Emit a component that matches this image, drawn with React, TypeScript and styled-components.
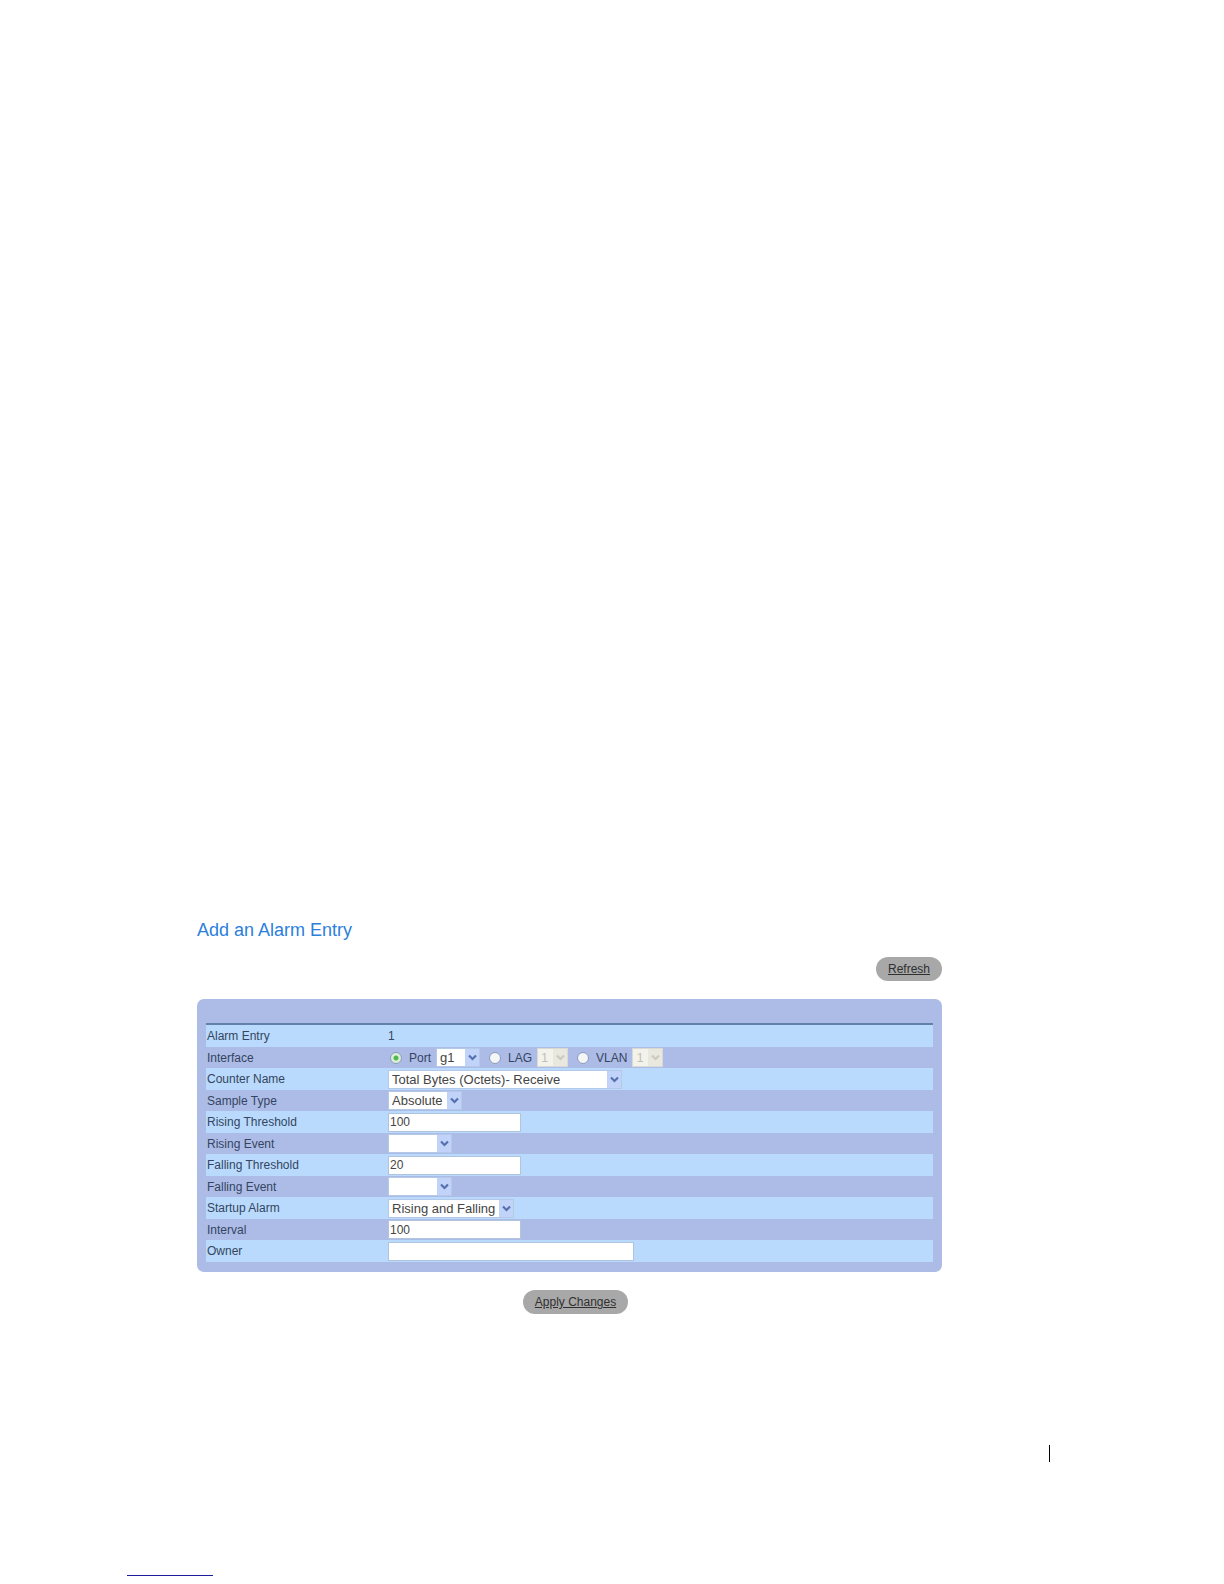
import React from 'react';
import styled, { createGlobalStyle } from 'styled-components';

interface DropdownProps {
  id: string;
  label?: string;
  width: number;
  options: string[];
  disabled?: boolean;
}

const Dropdown: React.FC<DropdownProps> = ({
  id,
  label,
  width,
  options,
  disabled,
}) => {
  return (
    <SelectWrap $width={width}>
      <SelectStyle id={id} aria-label={label} disabled={disabled}>
        {options.map((option) => (
          <option key={option}>{option}</option>
        ))}
      </SelectStyle>
      <ArrowBox $disabled={disabled}>
        <svg width="9" height="7" viewBox="0 0 9 7" aria-hidden="true">
          <path
            d="M1 1.5L4.5 5L8 1.5"
            fill="none"
            stroke={disabled ? '#cccabf' : '#5570ad'}
            strokeWidth="2.2"
          />
        </svg>
      </ArrowBox>
    </SelectWrap>
  );
};

interface InterfaceOptionProps {
  name: string;
  width: number;
  options: string[];
  checked?: boolean;
}

const InterfaceOption: React.FC<InterfaceOptionProps> = ({
  name,
  width,
  options,
  checked,
}) => {
  const id = name.toLowerCase();
  return (
    <OptionWrap>
      <RadioStyle
        type="radio"
        name="interface"
        id={id}
        defaultChecked={checked}
      />
      <OptionLabel htmlFor={id}>{name}</OptionLabel>
      <Dropdown
        id={`${id}-number`}
        label={`${name} number`}
        width={width}
        options={options}
        disabled={!checked}
      />
    </OptionWrap>
  );
};

interface FieldRowProps {
  label: string;
  htmlFor?: string;
  children: React.ReactNode;
}

const FieldRow: React.FC<FieldRowProps> = ({ label, htmlFor, children }) => {
  return (
    <RowStyle>
      <LabelCell scope="row">
        {htmlFor ? <label htmlFor={htmlFor}>{label}</label> : label}
      </LabelCell>
      <ValueCell>
        <ValueWrap>{children}</ValueWrap>
      </ValueCell>
    </RowStyle>
  );
};

const App: React.FC = () => {
  return (
    <>
      <GlobalStyle />
      <Page>
        <Content>
          <TitleStyle>Add an Alarm Entry</TitleStyle>
          <Toolbar>
            <PillButton type="button">Refresh</PillButton>
          </Toolbar>
          <Panel>
            <TableStyle>
              <tbody>
                <FieldRow label="Alarm Entry">
                  <StaticText>1</StaticText>
                </FieldRow>
                <FieldRow label="Interface">
                  <OptionGroup role="radiogroup" aria-label="Interface">
                    <InterfaceOption
                      name="Port"
                      width={44}
                      options={['g1']}
                      checked
                    />
                    <InterfaceOption name="LAG" width={31} options={['1']} />
                    <InterfaceOption name="VLAN" width={31} options={['1']} />
                  </OptionGroup>
                </FieldRow>
                <FieldRow label="Counter Name" htmlFor="counter">
                  <Dropdown
                    id="counter"
                    width={234}
                    options={['Total Bytes (Octets)- Receive']}
                  />
                </FieldRow>
                <FieldRow label="Sample Type" htmlFor="sample">
                  <Dropdown id="sample" width={74} options={['Absolute']} />
                </FieldRow>
                <FieldRow label="Rising Threshold" htmlFor="rising">
                  <InputStyle id="rising" $width={133} defaultValue="100" />
                </FieldRow>
                <FieldRow label="Rising Event" htmlFor="rising-event">
                  <Dropdown id="rising-event" width={64} options={['']} />
                </FieldRow>
                <FieldRow label="Falling Threshold" htmlFor="falling">
                  <InputStyle id="falling" $width={133} defaultValue="20" />
                </FieldRow>
                <FieldRow label="Falling Event" htmlFor="falling-event">
                  <Dropdown id="falling-event" width={64} options={['']} />
                </FieldRow>
                <FieldRow label="Startup Alarm" htmlFor="startup">
                  <Dropdown
                    id="startup"
                    width={126}
                    options={['Rising and Falling']}
                  />
                </FieldRow>
                <FieldRow label="Interval" htmlFor="interval">
                  <InputStyle id="interval" $width={133} defaultValue="100" />
                </FieldRow>
                <FieldRow label="Owner" htmlFor="owner">
                  <InputStyle id="owner" $width={246} />
                </FieldRow>
              </tbody>
            </TableStyle>
          </Panel>
          <ActionBar>
            <PillButton type="button">Apply Changes</PillButton>
          </ActionBar>
        </Content>
        <Footer>
          <FooterDivider />
          <FooterRule />
        </Footer>
      </Page>
    </>
  );
};

const GlobalStyle = createGlobalStyle`
  * {
    box-sizing: border-box;
  }
  body {
    margin: 0;
    background: #fff;
    font-family: 'Liberation Sans', Arial, sans-serif;
    font-size: 12px;
    color: #34455f;
  }
`;
const Page = styled.main`
  display: flex;
  flex-direction: column;
  min-height: 100vh;
  padding-top: 919px;
`;
const Content = styled.section`
  margin: 0 282px 0 197px;
`;
const TitleStyle = styled.h1`
  margin: 0 0 16px;
  color: #2b80dc;
  font-size: 18px;
  font-weight: 400;
  line-height: 22px;
`;
const Toolbar = styled.div`
  display: flex;
  justify-content: flex-end;
  margin-bottom: 18px;
`;
const ActionBar = styled.div`
  display: flex;
  justify-content: center;
  margin-top: 18px;
  padding-left: 12px;
`;
const PillButton = styled.button`
  height: 24px;
  padding: 0 12px;
  border: none;
  border-radius: 12px;
  background: #a8a8a8;
  color: #303030;
  font-family: inherit;
  font-size: 12px;
  line-height: 24px;
  text-decoration: underline;
`;
const Panel = styled.div`
  padding: 24px 9px 10px;
  border-radius: 7px;
  background: #adbce7;
`;
const TableStyle = styled.table`
  display: block;
  width: 100%;
  border-top: 2px solid #6480ad;

  tbody {
    display: block;
  }
`;
const RowStyle = styled.tr`
  display: flex;
  height: 21px;

  &:nth-child(odd) {
    height: 22px;
    background: #b9dafc;
  }
`;
const LabelCell = styled.th`
  width: 182px;
  padding: 0 0 0 1px;
  font-weight: 400;
  line-height: 22px;
  text-align: left;
`;
const ValueCell = styled.td`
  flex: 1;
  padding: 0;
`;
const ValueWrap = styled.div`
  display: flex;
  align-items: center;
  height: 100%;
`;
const StaticText = styled.span`
  line-height: 22px;
`;
const OptionGroup = styled.div`
  display: flex;
  gap: 9px;
`;
const OptionWrap = styled.div`
  display: flex;
  align-items: center;

  &:first-child {
    padding-left: 2px;
  }
`;
const RadioStyle = styled.input`
  appearance: none;
  width: 12px;
  height: 12px;
  margin: 0;
  border: 1px solid #8b9dbb;
  border-radius: 50%;
  background: #f4f6f8;

  &:checked {
    background: radial-gradient(circle, #4fb84f 0 2px, #dcf0d9 3px);
  }
`;
const OptionLabel = styled.label`
  padding: 0 5px 0 7px;
  line-height: 20px;
`;
const SelectWrap = styled.div<{ $width: number }>`
  display: grid;
  grid-template-columns: 1fr 15px;
  width: ${({ $width }) => $width}px;
  height: 19px;
`;
const SelectStyle = styled.select`
  grid-area: 1 / 1 / 2 / 3;
  appearance: none;
  min-width: 0;
  height: 19px;
  margin: 0;
  padding: 0 0 0 3px;
  border: 1px solid #b4c8e8;
  border-radius: 0;
  background: #fff;
  color: #444;
  font-family: inherit;
  font-size: 13px;

  &:disabled {
    border-color: #d9dad6;
    background: #f3f3eb;
    color: #c2c1b7;
    opacity: 1;
  }
`;
const ArrowBox = styled.span<{ $disabled?: boolean }>`
  grid-area: 1 / 2 / 2 / 3;
  z-index: 1;
  display: flex;
  justify-content: center;
  align-items: center;
  margin: 1px 1px 1px 0;
  background: ${({ $disabled }) => ($disabled ? '#e8e8df' : '#c2d3fa')};
  pointer-events: none;
`;
const InputStyle = styled.input<{ $width: number }>`
  width: ${({ $width }) => $width}px;
  height: 19px;
  margin: 0;
  padding: 0 1px;
  border: 1px solid #b0c4de;
  border-radius: 0;
  background: #fff;
  color: #444;
  font-family: inherit;
  font-size: 12px;
`;
const Footer = styled.footer`
  display: flex;
  flex-direction: column;
  flex: 1;
  justify-content: space-between;
  padding: 131px 174px 8px 127px;
`;
const FooterDivider = styled.div`
  align-self: flex-end;
  height: 17px;
  border-left: 1px solid #000;
`;
const FooterRule = styled.div`
  width: 86px;
  border-top: 1px solid #1c1c9c;
`;

export default App;
